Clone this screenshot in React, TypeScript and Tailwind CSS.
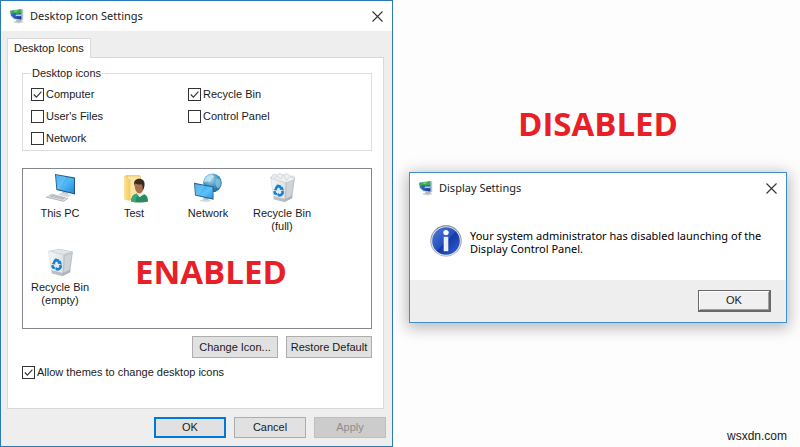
import { useState, type ButtonHTMLAttributes, type ReactNode } from "react";
import clsx from "clsx";

function MonitorIcon() {
  return (
    <svg viewBox="0 0 16 16" className="size-4 shrink-0" aria-hidden="true">
      <defs>
        <linearGradient id="monitor-screen" x1="0" y1="0" x2="1" y2="1">
          <stop offset="0" stopColor="#3f8ed0" />
          <stop offset="0.5" stopColor="#245fb0" />
          <stop offset="1" stopColor="#1b2f8f" />
        </linearGradient>
      </defs>
      <path d="M4.5 13.6 8 12.4l5.6.4.6 1.4-4.6 1.2-4.4-.6z" fill="#d3d6d9" />
      <path d="M7.4 11.4h4.4l.8 2.2-2.4.8-3.2-.8z" fill="#b3b9bf" />
      <path d="m12.6 1 1.6.6v10.2l-1.8.6z" fill="#b4c3ce" />
      <path d="M.8 2.4 12.8.8l.2 11.6-8-1.2L1.6 8z" fill="#a5c3da" />
      <path d="m1.4 3 10.8-1.4.2 10-6.8-1.2L2.2 7.6z" fill="url(#monitor-screen)" />
      <path d="m1.4 3 10.8-1.4v4C10.4 4.6 9 6.2 7 5.4 5 4.6 3.4 5.4 1.8 5.2z" fill="#3dac4b" />
      <path d="M5 2.6 8.6 2 8 3.8l-2.4.4z" fill="#7ccd6b" />
      <path d="M6.6 7c1.8-1.2 3.4.2 5.6-1v1.8c-2 1-3.6-.2-5.4.6z" fill="#a4daef" />
    </svg>
  );
}

function ThisPcIcon() {
  return (
    <svg viewBox="0 0 32 32" className="size-8" aria-hidden="true">
      <defs>
        <linearGradient id="pc-screen" x1="0" y1="0" x2="1" y2="1">
          <stop offset="0" stopColor="#2b9be8" />
          <stop offset="0.5" stopColor="#4fb8f5" />
          <stop offset="1" stopColor="#1e8ce0" />
        </linearGradient>
      </defs>
      <path d="m18 19.5 6 1.5v3.2l-6-1.2z" fill="#b9c0c7" />
      <path d="m14 22.2 4-1.6 9.5 2.6-4 1.7z" fill="#d5dade" />
      <path d="m11 2 20 3.6v17L12.4 18z" fill="#25557f" />
      <path d="m12 3.1 18 3.3v14.8l-16.8-4.1z" fill="url(#pc-screen)" />
      <path d="m12 3.1 10.5 2L15 17.5l-1.8-.4z" fill="#7fd0fa" opacity=".45" />
      <path d="m7.5 21.6 16.6 4-4.4 3.2L2 24.5z" fill="#dfe2e5" />
      <path d="m2 24.5 17.7 4.3v1L2 25.4zm17.7 4.3 4.4-3.2v.9l-4.4 3.3z" fill="#a9afb5" />
      <path d="m7 22.7 14.4 3.5M5.4 23.7l14.5 3.5M11 22.5l-4.2 2.8m7.5-2-4 2.8m7.4-2-4 2.9m7.1-2-3.8 2.5" stroke="#9da4aa" strokeWidth=".6" fill="none" />
    </svg>
  );
}

function UserFolderIcon() {
  return (
    <svg viewBox="0 0 32 32" className="size-8" aria-hidden="true">
      <defs>
        <linearGradient id="folder-front" x1="0" y1="0" x2="1" y2="0">
          <stop offset="0" stopColor="#fbe59a" />
          <stop offset="1" stopColor="#f1c95d" />
        </linearGradient>
      </defs>
      <path d="M6 4.5 8 3h13.5l1.4 1.8v22L10 28.5 6 27z" fill="#efcd70" />
      <path d="M10 4.4h12v20.8l-12 2z" fill="#f9e5a4" />
      <path d="m6 4.5 6.4 3.2v21L6 27z" fill="url(#folder-front)" />
      <path d="M13.2 29.5c0-5.3 2.8-7.6 6.8-7.9l6.5.6c2.6 1.2 3.6 3.6 3.5 7.3-4.7 1.3-12 1.3-16.8 0z" fill="#2c8961" />
      <path d="M13.2 29.5c0-5.3 2.8-7.6 6.8-7.9l1 2c-3 1-3.5 3-3.3 6.8-1.8-.1-3.2-.5-4.5-.9z" fill="#3da878" />
      <path d="m19 20.5 5.6-1 1.6 2.7-4.7 3-2.3-3.2z" fill="#e8efe9" />
      <path d="M16.6 13.2c0-3.2 2-5 4.8-5s4.8 1.9 4.8 5c0 4-2.2 8.2-4.8 8.2s-4.8-4-4.8-8.2z" fill="#a8714b" />
      <path d="M16.3 13.6c-.9-4.7 1.5-6.8 5-6.8 3.4 0 6 2.3 5.1 7.2-.3 1.8-1 3.4-1.8 4.3.4-3-.3-5-1-6-2.5.5-5-.4-6.4-.9z" fill="#3a2a22" />
    </svg>
  );
}

function NetworkIcon() {
  return (
    <svg viewBox="0 0 32 32" className="size-8" aria-hidden="true">
      <defs>
        <radialGradient id="globe" cx=".4" cy=".3" r=".8">
          <stop offset="0" stopColor="#a9dcf3" />
          <stop offset="0.55" stopColor="#3f8fbf" />
          <stop offset="1" stopColor="#1f618f" />
        </radialGradient>
        <linearGradient id="net-screen" x1="0" y1="0" x2="1" y2="1">
          <stop offset="0" stopColor="#2795e6" />
          <stop offset="0.6" stopColor="#5cc3fa" />
          <stop offset="1" stopColor="#2b97e8" />
        </linearGradient>
      </defs>
      <circle cx="20.5" cy="10.8" r="9.3" fill="url(#globe)" />
      <path d="M13.2 6.2c2-2.7 5-4 7.6-3.5l1.5 2-3.1 2.2-1 3-3-.5-2.7 1.1c-.5-1.5-.1-3 .7-4.3z" fill="#c9eaf3" opacity=".8" />
      <path d="m24.4 6.3 3.4 1c1.4 2.6 1.3 5.6 0 7.9l-2.3 1.1-2.3-4z" fill="#8ac5d9" opacity=".8" />
      <path d="m11.5 24.5 5 1v3.6l-5-.6z" fill="#aeb8c0" />
      <path d="M7.3 28.2c2.5-1.3 9-1 12 .6-2.6 1.6-9.4 1.3-12-.6z" fill="#ced6dc" />
      <path d="m2 10.8 19.5 3.7v13.2L3 23.6z" fill="#285c87" />
      <path d="m2.9 11.9 17.7 3.4v11.1L3.8 22.8z" fill="url(#net-screen)" />
      <path d="m2.9 11.9 10 1.9-6.6 9.5-2.5-.5z" fill="#8ad5fb" opacity=".4" />
    </svg>
  );
}

function RecycleBinIcon({ full = false }: { full?: boolean }) {
  return (
    <svg viewBox="0 0 32 32" className="size-8" aria-hidden="true">
      <defs>
        <linearGradient id="bin-side" x1="0" y1="0" x2="1" y2="0">
          <stop offset="0" stopColor="#f4f6f7" />
          <stop offset="1" stopColor="#dfe3e6" />
        </linearGradient>
      </defs>
      <path d="m4.5 5 11-2.3L29 5.6l-9.5 3.2z" fill="#c7cdd2" />
      <path d="m6.5 5.2 9-1.7 11 2.3-7.5 2.2z" fill="#e3e7ea" />
      <path d="m4.5 5 15 3.8L18.6 30 8 27.2z" fill="url(#bin-side)" stroke="#c6ccd0" strokeWidth=".5" />
      <path d="M19.5 8.8 29 5.6l-2.9 20.7-7.5 3.7z" fill="#bdc3c8" />
      <path d="m21 10 6.4-2.3-2.4 17-5 2.8z" fill="#cfd4d8" />
      <path d="m7.6 24 11.2 2.9 7.7-3.6-.4 3-7.5 3.7L8 27.2z" fill="#a6adb3" opacity=".7" />
      {full && (
        <g stroke="#b7bdc1" strokeWidth=".5">
          <path d="m5 6.3 2.3-3.9 4.1.5 2.2-1.6 3.5 1.8 3.8-1.4 3.5 2.2 3.6.5.3 3.3-8.6 3.1z" fill="#edf0f0" />
          <path d="m8 6.5 3-2.6 3.3 3 3.2-3.8 3 5.2 3-3.8 3.7 1.2" fill="none" />
        </g>
      )}
      <g fill="none" stroke="#1781cf" strokeWidth="2.5" strokeLinejoin="round">
        <path d="m9.6 17 2-3.2 2.5.7 1.2 2.6" />
        <path d="m16.3 18.8.4 2.4-1.8 2h-2.3" />
        <path d="m11 22.1-2.2-.8-.3-2.3" />
      </g>
      <path d="m13.4 17.4 4.4.8-1.1-3.8zM13 20.7l-2.1 2.2 2.4 2.2zM7.4 18l2.7-2.2 1.5 2.8z" fill="#1781cf" />
    </svg>
  );
}

function InfoIcon() {
  return (
    <svg viewBox="0 0 32 32" className="size-8 shrink-0" aria-hidden="true">
      <defs>
        <linearGradient id="info-fill" x1="0" y1="0" x2="1" y2="1">
          <stop offset="0" stopColor="#4f7be0" />
          <stop offset="0.5" stopColor="#2450bd" />
          <stop offset="0.52" stopColor="#1638a3" />
          <stop offset="1" stopColor="#2f66dc" />
        </linearGradient>
        <linearGradient id="info-ring" x1="0" y1="0" x2="0" y2="1">
          <stop offset="0" stopColor="#70777f" />
          <stop offset="1" stopColor="#b7bcc2" />
        </linearGradient>
      </defs>
      <circle cx="16" cy="16" r="15.7" fill="url(#info-ring)" />
      <circle cx="16" cy="16" r="14.8" fill="#dfe4ea" />
      <circle cx="16" cy="16" r="13.8" fill="url(#info-fill)" />
      <circle cx="16" cy="7.6" r="2.7" fill="#fff" />
      <path d="M13.7 11.8h4.6v14.4h-4.6z" fill="#eceff5" />
    </svg>
  );
}

function CloseButton() {
  return (
    <button type="button" aria-label="Close" className="ml-auto p-1">
      <svg viewBox="0 0 11 11" className="size-[11px]" aria-hidden="true">
        <path d="m.5.5 10 10m0-10-10 10" stroke="#333" strokeWidth="1.1" />
      </svg>
    </button>
  );
}

function TitleBar({ title }: { title: string }) {
  return (
    <header className="flex h-[30px] items-center gap-[5px] bg-white pr-[5px] pl-2">
      <MonitorIcon />
      <h2 className="font-['Noto_Sans',sans-serif] text-[11px] text-[#1a1a1a]">{title}</h2>
      <CloseButton />
    </header>
  );
}

function CheckBox({ label, checked: initial = false }: { label: string; checked?: boolean }) {
  const [checked, setChecked] = useState(initial);

  return (
    <label className="flex h-[22px] items-center gap-[2px]">
      <span className="grid size-[13px]">
        <input
          type="checkbox"
          checked={checked}
          onChange={(e) => setChecked(e.target.checked)}
          className="col-start-1 row-start-1 size-[13px] appearance-none border border-[#333] bg-white"
        />
        {checked && (
          <svg viewBox="0 0 13 13" className="pointer-events-none col-start-1 row-start-1 size-[13px]" aria-hidden="true">
            <path d="m2.8 6.5 2.6 2.7 5-5.6" fill="none" stroke="#333" strokeWidth="1.1" />
          </svg>
        )}
      </span>
      {label}
    </label>
  );
}

function Button({ className, ...props }: ButtonHTMLAttributes<HTMLButtonElement>) {
  return (
    <button
      type="button"
      className={clsx(
        "border bg-[#e1e1e1] disabled:border-[#bfbfbf] disabled:bg-[#cccccc] disabled:text-[#8c8c8c]",
        className,
      )}
      {...props}
    />
  );
}

const desktopIcons: { label: string; icon: ReactNode }[] = [
  { label: "This PC", icon: <ThisPcIcon /> },
  { label: "Test", icon: <UserFolderIcon /> },
  { label: "Network", icon: <NetworkIcon /> },
  { label: "Recycle Bin (full)", icon: <RecycleBinIcon full /> },
  { label: "Recycle Bin (empty)", icon: <RecycleBinIcon /> },
];

function DesktopIconSettings() {
  return (
    <section className="border border-[#2b7ab8] bg-[#eeeeee]">
      <TitleBar title="Desktop Icon Settings" />

      <div className="px-[6px] pt-[7px]">
        <div role="tablist" className="flex">
          <button type="button" role="tab" aria-selected="true" className="relative z-10 -mb-px h-5 border border-b-0 border-[#d9d9d9] bg-white px-[6px]">
            Desktop Icons
          </button>
        </div>

        <div className="mr-[2px] border border-[#d9d9d9] bg-white pt-[7px] pr-[11px] pb-[25px] pl-[14px]">
          <fieldset className="border border-[#dcdcdc] px-2 pt-[2px] pb-px">
            <legend className="px-[1px] leading-4">Desktop icons</legend>
            <div className="grid grid-cols-[157px_1fr]">
              <CheckBox label="Computer" checked />
              <CheckBox label="Recycle Bin" checked />
              <CheckBox label="User's Files" />
              <CheckBox label="Control Panel" />
              <CheckBox label="Network" />
            </div>
          </fieldset>

          <div className="relative mt-[17px] border border-[#828790] bg-white pt-[3px] pb-2">
            <ul className="grid grid-cols-[repeat(4,74px)]">
              {desktopIcons.map(({ label, icon }) => (
                <li key={label} className="flex h-[74px] flex-col items-center gap-[3px] px-1 text-center leading-[13px]">
                  {icon}
                  {label}
                </li>
              ))}
            </ul>
            <strong className="absolute top-[83px] left-28 font-['Open_Sans',sans-serif] text-[33px] leading-10 font-bold text-[#e81f27]">
              ENABLED
            </strong>
          </div>

          <div className="mt-[7px] flex justify-end gap-2">
            <Button className="h-[22px] w-[86px] border-[#adadad]">Change Icon...</Button>
            <Button className="h-[22px] w-[86px] border-[#adadad]">Restore Default</Button>
          </div>

          <div className="mt-[3px]">
            <CheckBox label="Allow themes to change desktop icons" checked />
          </div>
        </div>

        <footer className="flex justify-end gap-2 py-2">
          <Button className="h-[21px] w-[72px] border-2 border-[#0078d7]">OK</Button>
          <Button className="h-[21px] w-[72px] border-[#adadad]">Cancel</Button>
          <Button className="h-[21px] w-[72px]" disabled>Apply</Button>
        </footer>
      </div>
    </section>
  );
}

function DisplaySettings() {
  return (
    <section className="border border-[#3e8fcb] bg-white shadow-[0_3px_14px_2px_rgba(0,0,0,0.28)]">
      <TitleBar title="Display Settings" />
      <div className="flex gap-2 px-5 pt-[22px] pb-[23px]">
        <InfoIcon />
        <p className="pt-1 font-['Noto_Sans',sans-serif] text-[11px] leading-[13px] text-black">
          Your system administrator has disabled launching of the Display Control Panel.
        </p>
      </div>
      <footer className="flex justify-end bg-[#eeeeee] px-[15px] py-[10px]">
        <button type="button" className="h-[22px] w-[73px] border border-r-2 border-b-2 border-[#696969] bg-[#f0f0f0] shadow-[inset_1px_1px_0_#fff,inset_-1px_-1px_0_#a0a0a0]">
          OK
        </button>
      </footer>
    </section>
  );
}

export default function App() {
  return (
    <main className="grid min-h-screen grid-cols-[393fr_407fr] bg-[#fdfdfd] font-['Liberation_Sans',sans-serif] text-[11px] text-[#1a1a1a]">
      <DesktopIconSettings />
      <div className="flex flex-col pr-[13px] pl-4">
        <strong className="mt-[104px] mb-7 text-center font-['Open_Sans',sans-serif] text-[33px] leading-10 font-bold text-[#e81f27]">
          DISABLED
        </strong>
        <DisplaySettings />
        <p className="mt-auto self-end pb-[3px] text-xs leading-4">wsxdn.com</p>
      </div>
    </main>
  );
}
